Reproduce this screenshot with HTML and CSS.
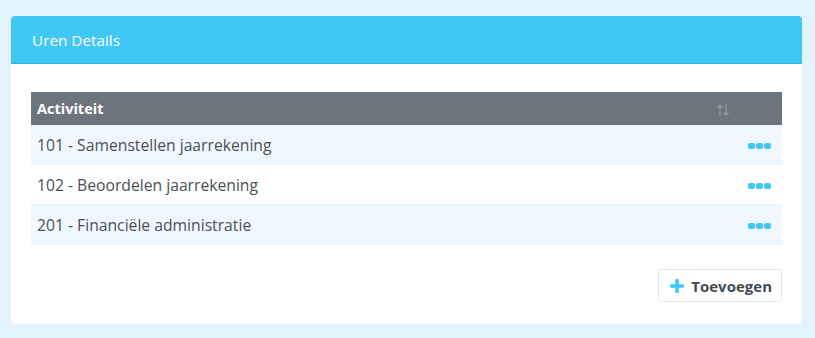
FILE: index.html
```html
<!DOCTYPE html>
<html lang="nl">
<head>
    <meta charset="UTF-8">
    <meta name="viewport" content="width=device-width, initial-scale=1.0">
    <title>Uren Details</title>
    <link rel="stylesheet" href="styles.css">
</head>
<body>
    <div class="card">
        <div class="card-header">Uren Details</div>
        <div class="card-body">
            <table class="table">
                <thead>
                    <tr>
                        <th>Activiteit</th>
                        <th class="sort">
                            <svg width="14" height="14" viewBox="0 0 14 14">
                                <path d="M4 13V2M1.5 4.5L4 2l2.5 2.5" fill="none" stroke="#8f969c" stroke-width="1.4"/>
                                <path d="M10 1v11M7.5 9.5L10 12l2.5-2.5" fill="none" stroke="#8f969c" stroke-width="1.4"/>
                            </svg>
                        </th>
                    </tr>
                </thead>
                <tbody>
                    <tr>
                        <td>101 - Samenstellen jaarrekening</td>
                        <td class="actions"><span class="dots"><i></i><i></i><i></i></span></td>
                    </tr>
                    <tr>
                        <td>102 - Beoordelen jaarrekening</td>
                        <td class="actions"><span class="dots"><i></i><i></i><i></i></span></td>
                    </tr>
                    <tr>
                        <td>201 - Financiële administratie</td>
                        <td class="actions"><span class="dots"><i></i><i></i><i></i></span></td>
                    </tr>
                </tbody>
            </table>
            <div class="footer">
                <button class="btn">
                    <svg width="14" height="14" viewBox="0 0 14 14">
                        <path d="M7 1.5v11M1.5 7h11" stroke="#40c8f4" stroke-width="3.6" stroke-linecap="round"/>
                    </svg>
                    Toevoegen
                </button>
            </div>
        </div>
    </div>
</body>
</html>
```

FILE: styles.css
```css
body {
    margin: 0;
    padding: 16px 13px 15px 11px;
    background: #e2f3fd;
    font-family: 'Open Sans', Lato, sans-serif;
    color: #495057;
}

.card {
    background: #fff;
    border-radius: 4px;
    overflow: hidden;
}

.card-header {
    background: #40c8f4;
    color: #fff;
    font-size: 15.3px;
    height: 47px;
    line-height: 48px;
    padding: 0 21px;
    border-bottom: 1px solid #36b4de;
}

.card-body {
    padding: 28px 20px 22px 20px;
}

.table {
    width: 100%;
    border-collapse: collapse;
    font-size: 15.7px;
}

.table th {
    background: #6c757d;
    color: #fff;
    font-weight: 700;
    font-size: 14.5px;
    text-align: left;
    height: 33px;
    line-height: 18px;
    padding: 0 6px;
    vertical-align: middle;
}

.table th.sort {
    width: 60px;
}

.table th.sort svg {
    display: block;
    margin-top: 2px;
}

.table td {
    height: 39px;
    padding: 0 6px;
    border-bottom: 1px solid #e2f1fb;
}

.table tbody tr:nth-child(odd) td {
    background: #f0f8fe;
}

.actions {
    text-align: right;
}

.dots {
    display: inline-flex;
    gap: 1px;
    margin-right: 5px;
    vertical-align: middle;
}

.dots i {
    width: 7px;
    height: 6px;
    border-radius: 2px;
    background: #40c8f4;
}

.footer {
    display: flex;
    justify-content: flex-end;
    padding-top: 24px;
}

.btn {
    display: flex;
    align-items: center;
    gap: 7px;
    height: 33px;
    padding: 0 9px 0 11px;
    background: #fff;
    border: 1px solid #e3e6e8;
    border-radius: 3px;
    font-family: inherit;
    font-size: 15px;
    font-weight: 700;
    color: #444b52;
}
```
